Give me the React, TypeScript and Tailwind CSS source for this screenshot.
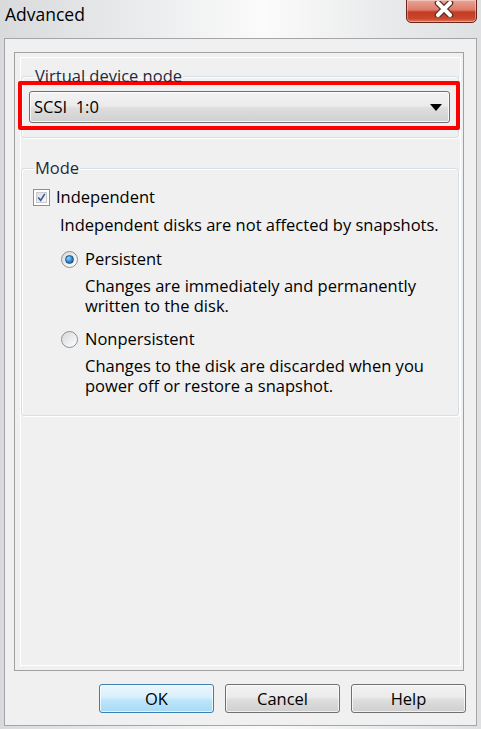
const font = { fontFamily: '"Open Sans", "Noto Sans", sans-serif' }

function CloseButton() {
  return (
    <div className="mt-[-1px] mr-[4px] h-[24px] w-[71px] rounded-b-[5px] border border-[#6b2419] bg-[linear-gradient(#e9a597,#dc7b68_45%,#c43b23_55%,#c9482e_85%,#e07a5c)] shadow-[inset_0_0_0_1px_rgba(255,255,255,0.35)] flex items-center justify-center">
      <svg width="24" height="16" viewBox="0 0 24 16" className="mt-[-4px] ml-[4px]">
        <path d="M6 2 L18 14 M18 2 L6 14" stroke="#5a2a22" strokeWidth="6.5" strokeLinecap="round" />
        <path d="M6 2 L18 14 M18 2 L6 14" stroke="#ffffff" strokeWidth="4" strokeLinecap="round" />
      </svg>
    </div>
  )
}

function Checkbox() {
  return (
    <div className="h-[17px] w-[17px] border border-[#8e8f8f] bg-white p-[2px] shrink-0">
      <div className="h-full w-full border border-[#c7c9cc] bg-[linear-gradient(135deg,#dcdee2,#f7f7f8)] flex items-center justify-center">
        <svg width="11" height="11" viewBox="0 0 11 11">
          <path d="M1.5 5.5 L4.5 9 L9.5 1" stroke="#3b5a9e" strokeWidth="2" fill="none" />
        </svg>
      </div>
    </div>
  )
}

function Radio({ checked }: { checked?: boolean }) {
  return (
    <div className="h-[17px] w-[17px] rounded-full border border-[#8e8f8f] bg-[linear-gradient(135deg,#d6d8dc,#ffffff)] flex items-center justify-center shrink-0">
      {checked && (
        <div className="h-[9px] w-[9px] rounded-full border border-[#1c5180] bg-[radial-gradient(circle_at_35%_30%,#9ed3f7,#2a86d0_55%,#134f8f)]" />
      )}
    </div>
  )
}

function Button({ label, primary }: { label: string; primary?: boolean }) {
  return (
    <div
      className={`h-[29px] w-[115px] rounded-[3px] border flex items-center justify-center text-[16.5px] text-black shadow-[inset_0_0_0_1px_rgba(255,255,255,0.7)] ${
        primary
          ? 'border-[#3c7fb1] bg-[linear-gradient(#eaf6fd,#d9f0fc_45%,#bee6fd_55%,#a7d9f5)]'
          : 'border-[#707070] bg-[linear-gradient(#f2f2f2,#ebebeb_45%,#dddddd_55%,#cfcfcf)]'
      }`}
    >
      {label}
    </div>
  )
}

export default function App() {
  return (
    <div
      className="h-[729px] w-[481px] flex flex-col bg-[linear-gradient(90deg,#d9dadb,#eeeff0_35%,#fbfbfb_55%,#e9eaeb_80%,#dfe0e1)] text-black leading-[20px]"
      style={font}
    >
      <div className="h-[38px] flex items-start justify-between">
        <div className="pl-[5px] pt-[4px] text-[17.5px] text-black">Advanced</div>
        <CloseButton />
      </div>

      <div className="ml-[4px] h-[688px] w-[473px] border border-[#a3a5a8] bg-[#f0f0f0] flex flex-col">
        <div className="ml-[9px] mt-[13px] h-[619px] w-[450px] border border-[#a0a0a0]">
          <div className="ml-[5px] mt-[4px] mr-[2px] h-[609px] border border-white flex flex-col">
            <fieldset className="mt-[8px] mr-[1px] h-[72px] rounded-[3px] border border-[#d5dfe5] shadow-[inset_1px_1px_0_#fff,1px_1px_0_#fff] px-0">
              <legend className="ml-[12px] px-[1px] text-[16.5px] text-[#1e2a3c]">Virtual device node</legend>
              <div className="mt-[-5px] ml-[-4px] mr-[-2px] h-[49px] rounded-[2px] border-[4px] border-[#ff0000] pl-[7px] pr-[6px] pt-[6px]">
                <div className="h-[32px] rounded-[3px] border border-[#707070] bg-[linear-gradient(#f3f3f3,#ebebeb_45%,#dddddd_55%,#d0d0d0)] shadow-[inset_0_0_0_1px_rgba(255,255,255,0.8)] flex items-center justify-between pl-[4px] pr-[7px]">
                  <span className="whitespace-pre text-[16.5px] text-black">SCSI  1:0</span>
                  <svg width="12" height="7" viewBox="0 0 12 7">
                    <path d="M0 0 H12 L6 7 Z" fill="#000" />
                  </svg>
                </div>
              </div>
            </fieldset>

            <fieldset className="mt-[20px] mr-[1px] h-[258px] rounded-[3px] border border-[#d5dfe5] shadow-[inset_1px_1px_0_#fff,1px_1px_0_#fff] px-0">
              <legend className="ml-[12px] px-[1px] text-[16.5px] text-[#1e2a3c]">Mode</legend>
              <div className="mt-[9px] ml-[11px] flex items-center gap-[6px] text-[16.5px]">
                <Checkbox />
                <span>Independent</span>
              </div>
              <div className="mt-[8px] ml-[38px] text-[16.5px]">Independent disks are not affected by snapshots.</div>

              <div className="mt-[14px] ml-[39px] flex items-center gap-[7px] text-[16.5px]">
                <Radio checked />
                <span>Persistent</span>
              </div>
              <div className="mt-[7px] ml-[63px] text-[16.5px]">
                Changes are immediately and permanently
                <br />
                written to the disk.
              </div>

              <div className="mt-[13px] ml-[39px] flex items-center gap-[7px] text-[16.5px]">
                <Radio />
                <span>Nonpersistent</span>
              </div>
              <div className="mt-[7px] ml-[63px] text-[16.5px]">
                Changes to the disk are discarded when you
                <br />
                power off or restore a snapshot.
              </div>
            </fieldset>
          </div>
        </div>

        <div className="mt-[13px] mr-[10px] flex justify-end gap-[11px]">
          <Button label="OK" primary />
          <Button label="Cancel" />
          <Button label="Help" />
        </div>
      </div>
    </div>
  )
}
